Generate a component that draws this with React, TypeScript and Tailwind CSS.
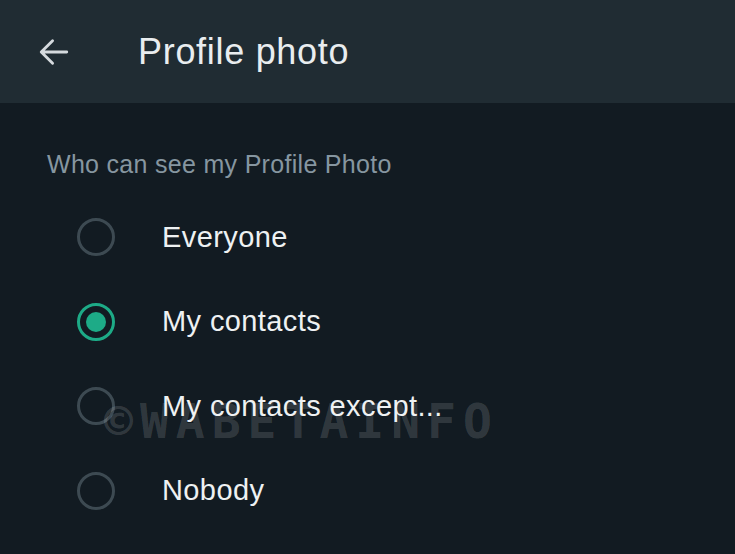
import type { JSX } from "react";

const options = ["Everyone", "My contacts", "My contacts except...", "Nobody"];
const selected = 1;

function Radio({ on }: { on: boolean }): JSX.Element {
  if (on) {
    return (
      <span className="grid h-[38px] w-[38px] place-items-center rounded-full border-[3px] border-[#1dab87]">
        <span className="h-[20px] w-[20px] rounded-full bg-[#1dab87]" />
      </span>
    );
  }
  return <span className="h-[38px] w-[38px] rounded-full border-[3px] border-[#3d4a52]" />;
}

export default function App(): JSX.Element {
  return (
    <div className="flex h-[554px] w-[735px] flex-col overflow-hidden bg-[#121b22] font-['Liberation_Sans',Arial,sans-serif]">
      <header className="flex h-[103px] shrink-0 items-center bg-[#202c33]">
        <svg className="ml-[37px] h-[34px] w-[34px]" viewBox="0 0 24 24" fill="none" stroke="#d5dade" strokeWidth="2" strokeLinecap="round" strokeLinejoin="round">
          <path d="M21 12H3.5M11 4l-8 8 8 8" />
        </svg>
        <h1 className="ml-[67px] text-[36px] leading-none tracking-[0.7px] text-[#e9edef]">Profile photo</h1>
      </header>

      <div className="relative flex flex-col">
        <p className="ml-[47px] mt-[46px] text-[25px] leading-[30px] tracking-[0.3px] text-[#8696a0]">Who can see my Profile Photo</p>
        <ul className="mt-[16px] flex flex-col">
          {options.map((o, i) => (
            <li key={o} className="flex h-[84.5px] items-center">
              <span className="ml-[77px] flex w-[38px]">
                <Radio on={i === selected} />
              </span>
              <span className="ml-[47px] text-[29px] tracking-[0.4px] text-[#eef1f2]">{o}</span>
            </li>
          ))}
        </ul>
        {/* watermark */}
        <span className="pointer-events-none absolute left-[104px] top-[294px] text-[48px] font-black leading-none tracking-[7px] text-white/15 font-['DejaVu_Sans_Mono',monospace]">
          ©WABETAINFO
        </span>
      </div>
    </div>
  );
}
